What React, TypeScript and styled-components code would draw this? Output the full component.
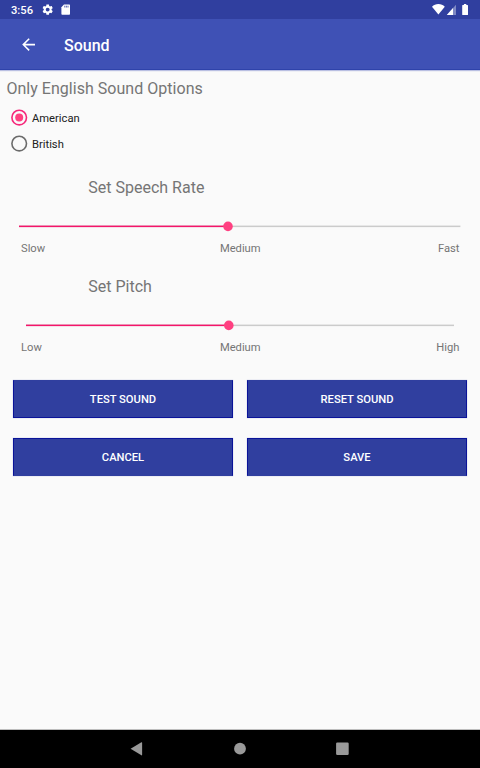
import React from 'react';
import styled, { createGlobalStyle } from 'styled-components';

const GlobalStyle = createGlobalStyle`
  * { box-sizing: border-box; }
  body { margin: 0; background: #fafafa; font-family: Roboto, sans-serif; }
`;

const Screen = styled.div`
  display: flex;
  flex-direction: column;
  width: 480px;
  height: 768px;
  background: #fafafa;
  overflow: hidden;
`;

const StatusBar = styled.header`
  display: flex;
  align-items: center;
  height: 19px;
  flex: none;
  padding: 1px 0 0 11px;
  background: #303f9f;
  color: #fff;
`;

const Clock = styled.span`
  width: 30px;
  padding-top: 1px;
  font-size: 11.2px;
  font-weight: 500;
  line-height: 17px;
`;

const StatusIcons = styled.svg`
  display: block;
  flex: none;
`;

const Spacer = styled.div`
  flex: 1;
`;

const Toolbar = styled.div`
  display: flex;
  align-items: center;
  height: 51px;
  flex: none;
  padding: 1px 0 0 19px;
  background: #3f51b5;
  border-bottom: 1px solid #2f43aa;
  box-shadow: 0 1px 1px rgba(63, 81, 181, 0.35);
  color: #fff;
`;

const BackButton = styled.button`
  display: flex;
  width: 45px;
  padding: 0;
  border: 0;
  background: none;
`;

const Title = styled.h1`
  margin: 0;
  padding-top: 2px;
  font-size: 16px;
  font-weight: 500;
  line-height: 20px;
`;

const Content = styled.main`
  flex: 1;
`;

const Heading = styled.h2<{ $left: number; $spacing?: number }>`
  margin: 0;
  padding-left: ${(p) => p.$left}px;
  font-size: 16px;
  font-weight: 400;
  line-height: 20px;
  letter-spacing: ${(p) => p.$spacing ?? 0}px;
  color: #757575;
`;

const OptionsSection = styled.section`
  padding-top: 9px;
`;

const RadioGroup = styled.div`
  display: flex;
  flex-direction: column;
  gap: 6px;
  padding: 9px 0 0 9px;
`;

const RadioRow = styled.label`
  display: flex;
  align-items: center;
  gap: 3px;
  height: 20px;
  font-size: 11.2px;
  color: #212121;
`;

const SliderSection = styled.section<{ $top: number }>`
  height: 99px;
  margin-top: ${(p) => p.$top}px;
`;

const Slider = styled.div<{ $inset: number }>`
  display: block;
  height: 12px;
  margin: 22px 0 0 ${(p) => p.$inset}px;
`;

const Labels = styled.div`
  display: grid;
  grid-template-columns: 1fr 1fr 1fr;
  padding: 10px 20.5px 0 21px;
  font-size: 11.2px;
  line-height: 14px;
  color: #757575;
  span:nth-child(2) { text-align: center; }
  span:nth-child(3) { text-align: right; }
`;

const Actions = styled.div`
  display: grid;
  grid-template-columns: 220px 220px;
  gap: 20px 14px;
  padding: 4px 13px 0;
`;

const ActionButton = styled.button<{ $edge: 'top' | 'bottom' }>`
  height: 38px;
  padding: 0;
  border: 1px solid #0a1399;
  border-${(p) => (p.$edge === 'top' ? 'bottom' : 'top')}-color: #303f9f;
  box-shadow: 0 0 1px rgba(48, 63, 159, 0.4);
  background: #303f9f;
  color: #fff;
  font-family: inherit;
  font-size: 11.2px;
  font-weight: 500;
`;

const NavBar = styled.nav`
  display: flex;
  align-items: center;
  justify-content: center;
  height: 39px;
  flex: none;
  border-top: 1px solid #bdbdbd;
  background: #000;
`;

const NavIcon = styled.svg`
  display: block;
  width: 102px;
  height: 38px;
  flex: none;
  fill: #999;
`;

function Radio({ label, checked }: { label: string; checked?: boolean }) {
  return (
    <RadioRow>
      <svg width="20" height="20" viewBox="0 0 20 20">
        <circle cx="10.2" cy="9.6" r="7.3" fill="none" stroke={checked ? '#f5277a' : '#6b6b6b'} strokeWidth="1.6" />
        {checked && <circle cx="10.2" cy="9.6" r="4" fill="#ff4081" />}
      </svg>
      {label}
    </RadioRow>
  );
}

interface SliderProps {
  title: string;
  top: number;
  inset: number;
  length: number;
  value: number;
  labels: string[];
}

function SliderBlock({ title, top, inset, length, value, labels }: SliderProps) {
  return (
    <SliderSection $top={top}>
      <Heading $left={88.3}>{title}</Heading>
      <Slider $inset={inset}>
        <svg width={length} height="12" viewBox={`0 0 ${length} 12`} display="block">
          <rect x="0" y="5.6" width={length} height="1.5" fill="#cbcbcb" />
          <rect x="0" y="5.6" width={value} height="1.5" fill="#f5146a" />
          <circle cx={value} cy="6.4" r="4.8" fill="#ff4081" />
        </svg>
      </Slider>
      <Labels>{labels.map((l) => <span key={l}>{l}</span>)}</Labels>
    </SliderSection>
  );
}

export default function App() {
  return (
    <Screen>
      <GlobalStyle />
      <StatusBar>
        <Clock>3:56</Clock>
        <StatusIcons width="30" height="18" viewBox="0 0 30 18">
          <g transform="translate(0.2 2.1) scale(0.54)">
            <path
              fill="#fff"
              d="M19.14 12.94c.04-.3.06-.61.06-.94 0-.32-.02-.64-.07-.94l2.03-1.58a.49.49 0 0 0 .12-.61l-1.92-3.32a.488.488 0 0 0-.59-.22l-2.39.96c-.5-.38-1.03-.7-1.62-.94l-.36-2.54a.484.484 0 0 0-.48-.41h-3.84c-.24 0-.43.17-.47.41l-.36 2.54c-.59.24-1.13.57-1.62.94l-2.39-.96a.48.48 0 0 0-.59.22L2.74 8.87c-.12.21-.08.47.12.61l2.03 1.58c-.05.3-.09.63-.09.94s.02.64.07.94l-2.03 1.58a.49.49 0 0 0-.12.61l1.92 3.32c.12.22.37.29.59.22l2.39-.96c.5.38 1.03.7 1.62.94l.36 2.54c.05.24.24.41.48.41h3.84c.24 0 .44-.17.47-.41l.36-2.54c.59-.24 1.13-.56 1.62-.94l2.39.96c.22.08.47 0 .59-.22l1.92-3.32a.48.48 0 0 0-.12-.61zM12 15.6A3.6 3.6 0 1 1 12 8.4a3.6 3.6 0 0 1 0 7.2z"
            />
          </g>
          <path fill="#fff" d="M23 3.4h5c.6 0 1 .4 1 1v8.3c0 .6-.4 1-1 1h-6.6c-.6 0-1-.4-1-1V6.2z" />
          <path stroke="#303f9f" strokeWidth=".8" d="M23.8 4.7v1.8M25.4 4.7v1.8M27 4.7v1.8" />
        </StatusIcons>
        <Spacer />
        <StatusIcons width="50" height="18" viewBox="430 1 50 18">
          <path fill="#fff" d="M438.4 14.6 432 6.7c1.6-1.6 3.9-2.6 6.4-2.6s4.8 1 6.4 2.6z" />
          <path fill="#7f89c4" d="M456 4.8V15h-9.2z" />
          <path fill="#fff" d="M453 8.1V15h-6.2z" />
          <path fill="#fff" d="M462.8 5h1.1v-.9h2.4V5h1.1c.4 0 .6.3.6.6v8.8c0 .4-.2.6-.6.6h-4.6c-.4 0-.6-.2-.6-.6V5.6c0-.3.2-.6.6-.6z" />
        </StatusIcons>
      </StatusBar>
      <Toolbar>
        <BackButton aria-label="Back">
          <svg width="19.2" height="19.2" viewBox="0 0 24 24" fill="#fff">
            <path d="M20 11H7.83l5.59-5.59L12 4l-8 8 8 8 1.41-1.41L7.83 13H20z" />
          </svg>
        </BackButton>
        <Title>Sound</Title>
      </Toolbar>
      <Content>
        <OptionsSection>
          <Heading $left={6.4} $spacing={0.03}>Only English Sound Options</Heading>
          <RadioGroup>
            <Radio label="American" checked />
            <Radio label="British" />
          </RadioGroup>
        </OptionsSection>
        <SliderBlock title="Set Speech Rate" top={24} inset={19.4} length={441.4} value={209} labels={['Slow', 'Medium', 'Fast']} />
        <SliderBlock title="Set Pitch" top={0} inset={25.8} length={428.5} value={202.8} labels={['Low', 'Medium', 'High']} />
        <Actions>
          <ActionButton $edge="bottom">TEST SOUND</ActionButton>
          <ActionButton $edge="bottom">RESET SOUND</ActionButton>
          <ActionButton $edge="top">CANCEL</ActionButton>
          <ActionButton $edge="top">SAVE</ActionButton>
        </Actions>
      </Content>
      <NavBar>
        <NavIcon viewBox="0 0 102 38"><path d="M43.6 18.8 54.4 12.3q.7-.3.7.5v12q0 .8-.7.5z" /></NavIcon>
        <NavIcon viewBox="0 0 102 38"><circle cx="51" cy="18.7" r="5.9" /></NavIcon>
        <NavIcon viewBox="0 0 102 38"><rect x="45.1" y="12.5" width="12.6" height="12.5" rx="1.2" /></NavIcon>
      </NavBar>
    </Screen>
  );
}
